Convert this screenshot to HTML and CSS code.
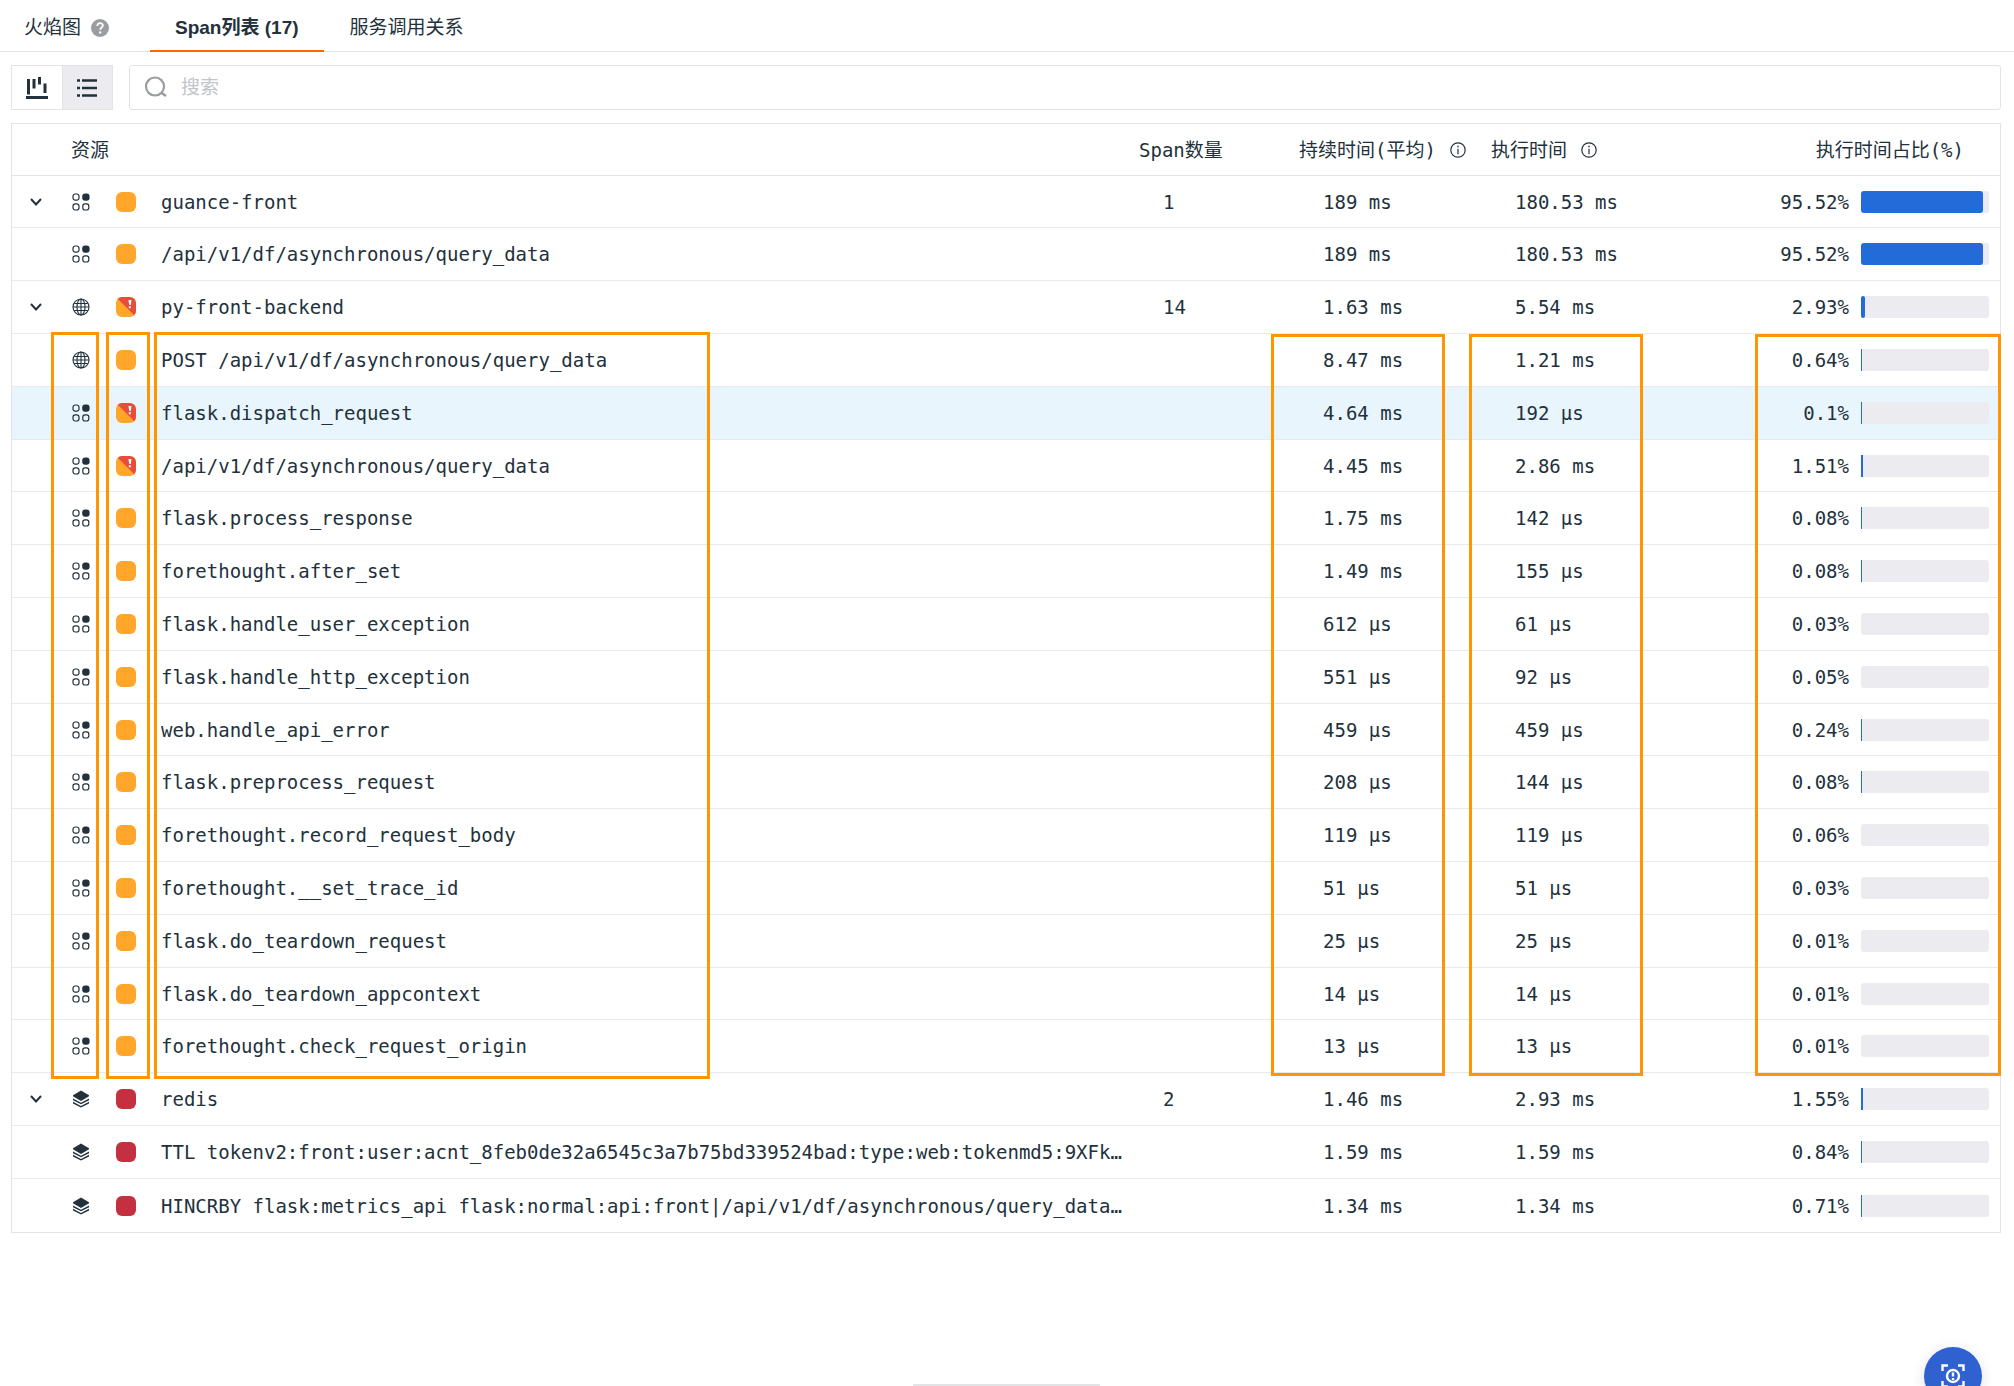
FILE: index.html
```html
<!DOCTYPE html>
<html lang="zh-CN">
<head>
<meta charset="utf-8">
<meta name="viewport" content="width=device-width, initial-scale=1">
<title>Span列表</title>
<link rel="stylesheet" href="styles.css">
</head>
<body>
<svg class="sprite" aria-hidden="true">
  <symbol id="chevron" viewBox="0 0 14 10"><path d="M2 2l5 5.500L12 2" fill="none" stroke="currentColor" stroke-width="2"/></symbol>
  <symbol id="custom" viewBox="0 0 18 18"><g fill="none" stroke="currentColor" stroke-width="1.200"><rect x="1" y="1" width="6" height="6.200" rx="2.200"/><rect x="1" y="10.800" width="6" height="6.200" rx="2.200"/><rect x="10.800" y="10.800" width="6" height="6.200" rx="2.200"/></g><rect x="10.200" y=".4" width="7.400" height="7.400" rx="3" fill="currentColor"/></symbol>
  <symbol id="web" viewBox="0 0 18 18"><g fill="none" stroke="currentColor" stroke-width="1.100"><circle cx="9" cy="9" r="8"/><ellipse cx="9" cy="9" rx="4" ry="8"/><path d="M9 1v16M1 9h16M2.200 5.500h13.600M2.200 12.500h13.600"/></g></symbol>
  <symbol id="stack" viewBox="0 0 18 18"><path d="M9 .6l8 4.700v1L9 11 1 6.300v-1z" fill="currentColor"/><path d="M1 8.600v1.700l8 4 8-4V8.600l-8 4.200zM1 11.800v1.700l8 4 8-4v-1.700L9 16z" fill="currentColor"/></symbol>
  <symbol id="info" viewBox="0 0 16 16"><circle cx="8" cy="8" r="7.200" fill="none" stroke="currentColor" stroke-width="1.200"/><path d="M7.300 3.800h1.400v1.400H7.300zM7.400 6.700h1.200v5.500H7.400z" fill="currentColor"/></symbol>
  <symbol id="fault" viewBox="0 0 20 20"><path d="M1 1L19 19Q20 18 20 14V6Q20 0 14 0H5Q2 0 1 1z" fill="#e74c3c"/><path d="M12.400 3h3l-.5 5h-1.600zM12.800 9.200h2v2h-2z" fill="#fff"/></symbol>
</svg>

<nav class="tabs">
  <a class="tab" href="#flame">火焰图
    <svg class="help" viewBox="0 0 18 18" aria-hidden="true"><circle cx="9" cy="9" r="9" fill="#999da1"/><path d="M6.300 7c0-3.800 5.600-3.600 5.600-.5C11.900 8.500 9.200 8.500 9.200 10.800" fill="none" stroke="#fff" stroke-width="1.800"/><circle cx="9.200" cy="13.400" r="1.200" fill="#fff"/></svg>
  </a>
  <a class="tab tab-active" href="#spans" aria-current="page">Span列表 (17)</a>
  <a class="tab" href="#services">服务调用关系</a>
</nav>

<main class="panel">
  <div class="toolbar">
    <div class="views">
      <button class="view" type="button" aria-label="火焰图视图"><svg width="22" height="22" viewBox="0 0 22 22" aria-hidden="true"><path d="M2.500 2v15.500M8 2v9.500M13.500 0v7.500M19 6.500v9.500M0 20.500h22" fill="none" stroke="currentColor" stroke-width="3"/></svg></button>
      <button class="view view-on" type="button" aria-label="列表视图" aria-pressed="true"><svg width="20" height="18" viewBox="0 0 20 18" aria-hidden="true"><path d="M5 1.500h15M5 9h15M5 16.500h15M0 1.500h3M0 9h3M0 16.500h3" fill="none" stroke="currentColor" stroke-width="2.600"/></svg></button>
    </div>
    <label class="search">
      <svg width="24" height="24" viewBox="0 0 24 24" aria-hidden="true"><circle cx="11" cy="10.500" r="9" fill="none" stroke="#999da1" stroke-width="2.200"/><path d="M17 16.500l5 3.500" stroke="#999da1" stroke-width="2.600"/></svg>
      <input type="search" placeholder="搜索" aria-label="搜索">
    </label>
  </div>

  <div class="sheet">
    <table class="spans">
      <colgroup><col><col class="c-count"><col class="c-avg"><col class="c-exec"><col class="c-share"></colgroup>
      <thead>
        <tr>
          <th scope="col" class="h-name">资源</th>
          <th scope="col">Span数量</th>
          <th scope="col"><span class="head">持续时间(平均)<svg><use href="#info"/></svg></span></th>
          <th scope="col"><span class="head">执行时间<svg><use href="#info"/></svg></span></th>
          <th scope="col" class="h-share">执行时间占比(%)</th>
        </tr>
      </thead>
      <tbody id="rows"></tbody>
    </table>
    <div class="mark mark-type"></div>
    <div class="mark mark-color"></div>
    <div class="mark mark-name"></div>
    <div class="mark mark-avg"></div>
    <div class="mark mark-exec"></div>
    <div class="mark mark-share"></div>
  </div>
</main>

<button class="assist" type="button" aria-label="诊断">
  <svg width="24" height="24" viewBox="0 0 24 24" fill="none" stroke="#fff" stroke-width="2.400" aria-hidden="true"><path d="M1.500 7V1.500H7M17 1.500h5.500V7M1.500 17v5.500H7M17 22.500h5.500V17"/><circle cx="12" cy="12" r="6"/><path d="M12 8.500v4M12 14v2"/></svg>
</button>
<div class="drag"></div>
<script src="rows.js"></script>
</body>
</html>
```
FILE: rows.js
```js
// [icon, colour, name, span count, average, execution, share]
const spans = [
  ["custom", "orange", "guance-front", 1, "189 ms", "180.53 ms", 95.52],
  ["custom", "orange", "/api/v1/df/asynchronous/query_data", "", "189 ms", "180.53 ms", 95.52],
  ["web", "fault", "py-front-backend", 14, "1.63 ms", "5.54 ms", 2.93],
  ["web", "orange", "POST /api/v1/df/asynchronous/query_data", "", "8.47 ms", "1.21 ms", 0.64],
  ["custom", "fault", "flask.dispatch_request", "", "4.64 ms", "192 μs", 0.1],
  ["custom", "fault", "/api/v1/df/asynchronous/query_data", "", "4.45 ms", "2.86 ms", 1.51],
  ["custom", "orange", "flask.process_response", "", "1.75 ms", "142 μs", 0.08],
  ["custom", "orange", "forethought.after_set", "", "1.49 ms", "155 μs", 0.08],
  ["custom", "orange", "flask.handle_user_exception", "", "612 μs", "61 μs", 0.03],
  ["custom", "orange", "flask.handle_http_exception", "", "551 μs", "92 μs", 0.05],
  ["custom", "orange", "web.handle_api_error", "", "459 μs", "459 μs", 0.24],
  ["custom", "orange", "flask.preprocess_request", "", "208 μs", "144 μs", 0.08],
  ["custom", "orange", "forethought.record_request_body", "", "119 μs", "119 μs", 0.06],
  ["custom", "orange", "forethought.__set_trace_id", "", "51 μs", "51 μs", 0.03],
  ["custom", "orange", "flask.do_teardown_request", "", "25 μs", "25 μs", 0.01],
  ["custom", "orange", "flask.do_teardown_appcontext", "", "14 μs", "14 μs", 0.01],
  ["custom", "orange", "forethought.check_request_origin", "", "13 μs", "13 μs", 0.01],
  ["stack", "red", "redis", 2, "1.46 ms", "2.93 ms", 1.55],
  ["stack", "red", "TTL tokenv2:front:user:acnt_8feb0de32a6545c3a7b75bd339524bad:type:web:tokenmd5:9XFk…", "", "1.59 ms", "1.59 ms", 0.84],
  ["stack", "red", "HINCRBY flask:metrics_api flask:normal:api:front|/api/v1/df/asynchronous/query_data…", "", "1.34 ms", "1.34 ms", 0.71]
];

const use = (id) => `<svg aria-hidden="true"><use href="#${id}"/></svg>`;

// Small shares stay visible as a hairline; negligible ones show an empty track.
const fillClass = (share) => (share > 0.07 && share < 2 ? "fill sliver" : "fill");

document.getElementById("rows").innerHTML = spans.map(([icon, color, name, count, avg, exec, share], i) => `
  <tr${i === 4 ? ' class="hovered"' : ""}>
    <td><div class="name">
      ${count ? `<button class="toggle" type="button" aria-label="收起 ${name}" aria-expanded="true">${use("chevron")}</button>` : '<span class="toggle"></span>'}
      <span class="type">${use(icon)}</span>
      <span class="swatch ${color}">${color === "fault" ? use("fault") : ""}</span>
      <span class="label">${name}</span>
    </div></td>
    <td class="value">${count}</td>
    <td class="value">${avg}</td>
    <td class="value">${exec}</td>
    <td><div class="share">${share}%<span class="track"><span class="${fillClass(share)}" style="width:${share}%"></span></span></div></td>
  </tr>`).join("");
```
FILE: styles.css
```css
* { box-sizing: border-box; }

body {
  margin: 0;
  min-height: 100vh;
  overflow: hidden;
  background: #fff;
  color: #22313c;
  font-family: "Liberation Sans", "Noto Sans CJK SC", sans-serif;
  font-size: 19px;
  line-height: 28px;
}

button { padding: 0; border: 0; background: none; color: inherit; font: inherit; cursor: pointer; }
svg { display: block; flex: none; }
.sprite { position: absolute; width: 0; height: 0; }

.tabs { display: flex; height: 52px; padding-left: 24px; border-bottom: 1px solid #e2e3e5; }
.tab {
  display: flex;
  align-items: center;
  gap: 10px;
  height: 52px;
  padding: 4px 0 0;
  margin-right: 41px;
  color: inherit;
  text-decoration: none;
}
.tab-active {
  margin-right: 26px;
  padding: 6px 25px 0;
  border-bottom: 2px solid #ff6600;
  font-weight: 700;
}
.help { width: 18px; height: 18px; }

.panel { padding: 13px 13px 0 11px; }

.toolbar { display: flex; gap: 16px; height: 45px; margin-bottom: 13px; }
.views { display: flex; width: 102px; border: 1px solid #e2e3e5; }
.view { display: flex; flex: 1; align-items: center; justify-content: center; }
.view-on { background: #ebebf0; border-left: 1px solid #e2e3e5; }
.search {
  display: flex;
  flex: 1;
  align-items: center;
  gap: 13px;
  padding-left: 14px;
  border: 1px solid #e2e3e5;
  border-radius: 3px;
}
.search input { flex: 1; padding: 0; border: 0; outline: 0; background: none; color: inherit; font: inherit; }
.search input::placeholder { color: #c2c5c8; }

.sheet { position: relative; border: 1px solid #e2e3e5; font-family: "DejaVu Sans Mono", "Noto Sans CJK SC", monospace; }
.spans { width: 100%; border-collapse: separate; border-spacing: 0; table-layout: fixed; }
.c-count { width: 160px; }
.c-avg { width: 192px; }
.c-exec { width: 200px; }
.c-share { width: 309px; }
.spans th { height: 52px; padding: 0; border-bottom: 1px solid #e2e3e5; font-weight: 400; text-align: left; }
.spans .h-name { padding-left: 59px; }
.spans .h-share { padding-right: 36px; text-align: right; }
.head { display: flex; align-items: center; gap: 14px; }
.head svg { width: 16px; height: 16px; }

.spans td { height: 53px; padding: 0; border-bottom: 1px solid #e8e9eb; white-space: nowrap; }
.spans tbody tr:nth-child(5n + 1) td { height: 52px; }
.spans tbody tr:last-child td { border-bottom: 0; }
.spans .value { padding-left: 24px; }
.hovered { background: #e9f5fd; }

.name { display: flex; align-items: center; }
.toggle { display: flex; width: 60px; height: 28px; padding-left: 17px; align-items: center; }
.toggle svg { width: 14px; height: 10px; }
.type { width: 44px; }
.type svg { width: 18px; height: 18px; }
.swatch { flex: none; width: 20px; height: 20px; margin-right: 25px; border-radius: 6px; overflow: hidden; }
.swatch svg { width: 20px; height: 20px; }
.orange, .fault { background: #ffa62b; }
.red { background: #c43040; }
.label { overflow: hidden; text-overflow: ellipsis; }

.share { display: flex; align-items: center; justify-content: flex-end; gap: 12px; padding-right: 11px; }
.track { width: 128px; height: 22px; border-radius: 3px; background: #ebebf0; }
.fill { display: block; height: 100%; border-radius: 3px; background: #226bd8; }
.sliver { min-width: 1px; border-radius: 0; }

/* Column call-outs drawn over the table */
.mark { position: absolute; top: 210px; height: 742px; border: 3px solid #ff9500; pointer-events: none; }
.mark-type, .mark-color, .mark-name { top: 208px; height: 747px; }
.mark-type { left: 39px; width: 48px; }
.mark-color { left: 94px; width: 44px; }
.mark-name { left: 142px; width: 556px; }
.mark-avg { right: 555px; width: 174px; }
.mark-exec { right: 357px; width: 174px; }
.mark-share { right: -1px; width: 246px; }

.assist {
  position: fixed;
  right: 32px;
  bottom: -19px;
  display: flex;
  align-items: center;
  justify-content: center;
  width: 58px;
  height: 58px;
  border-radius: 50%;
  background: #2f62d0;
  box-shadow: 0 2px 14px rgba(0, 0, 0, .12);
}
.drag { position: fixed; bottom: 0; left: 50%; width: 187px; height: 2px; margin-left: -94px; background: #e2e3e5; }
```
